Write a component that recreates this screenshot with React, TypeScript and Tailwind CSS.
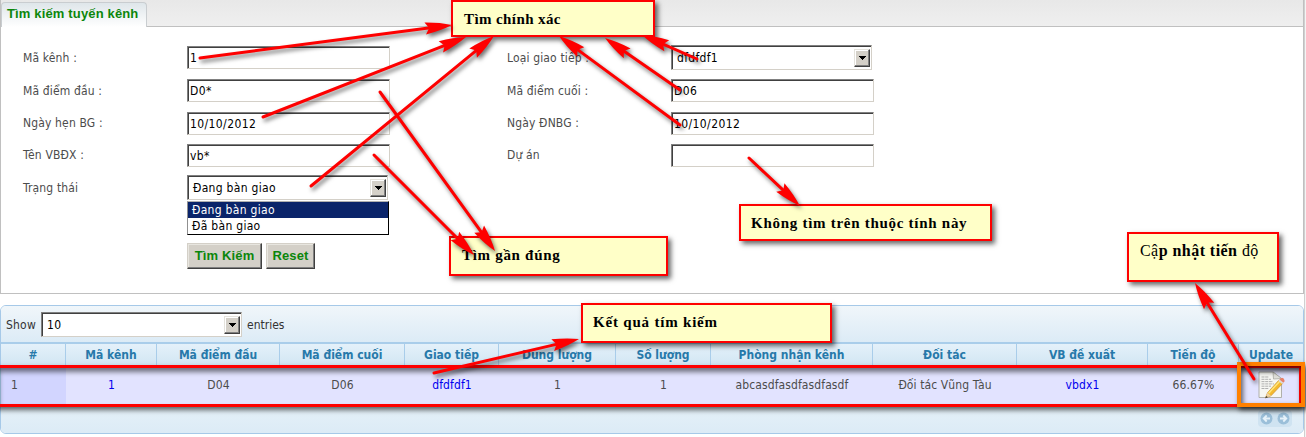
import type { ReactNode } from "react";

const sans = "font-['DejaVu_Sans_Condensed','DejaVu_Sans',sans-serif] [font-stretch:condensed]";

function Field({ value }: { value?: string }) {
  return (
    <div className="flex h-[23px] w-[203px] items-center border border-t-[#808080] border-l-[#808080] border-r-[#d4d0c8] border-b-[#d4d0c8] bg-white">
      <div className="flex h-full w-full items-center border-t border-l border-[#404040] pl-px text-[12px] tracking-[0.4px] text-black">
        {value}
      </div>
    </div>
  );
}

function DropButton() {
  return (
    <div className="flex h-[18px] w-4 items-center justify-center border border-t-[#e4e2dc] border-l-[#e4e2dc] border-r-[#404040] border-b-[#404040] bg-[#d4d0c8] shadow-[inset_-1px_-1px_0_#808080,inset_1px_1px_0_#ffffff]">
      <svg width="7" height="4" viewBox="0 0 7 4" shapeRendering="crispEdges">
        <path d="M0 0H7L3.5 4Z" fill="#000" />
      </svg>
    </div>
  );
}

function Select({ value }: { value: string }) {
  return (
    <div className="h-[25px] w-[201px] border border-t-[#808080] border-l-[#808080] border-r-[#d4d0c8] border-b-[#d4d0c8] bg-white">
      <div className="flex h-full w-full items-center justify-between border-t border-l border-[#404040] pr-px pl-1 text-[12px] tracking-[0.3px] text-black">
        <span>{value}</span>
        <DropButton />
      </div>
    </div>
  );
}

function Label({ children }: { children?: ReactNode }) {
  return <div className="text-[12px] tracking-[0.15px] text-[#4c4c4c]">{children}</div>;
}

function GreyButton({ children, w }: { children: ReactNode; w: string }) {
  return (
    <div
      className={`${w} flex h-[26px] items-center justify-center border border-t-[#d4d0c8] border-l-[#d4d0c8] border-r-[#404040] border-b-[#404040] bg-[#d4d0c8] font-['Liberation_Sans',Arial,sans-serif] text-[13px] font-bold tracking-[0.15px] text-[#0b860b] shadow-[inset_-1px_-1px_0_#808080,inset_1px_1px_0_#e8e6e0]`}
    >
      {children}
    </div>
  );
}

const callouts = [
  { text: "Tìm chính xác", box: "left-[451px] top-0 h-[37px] w-[204px] pt-[7px] pl-[11px] tracking-[0.4px]" },
  { text: "Tìm gần đúng", box: "left-[449px] top-[236px] h-[40px] w-[219px] pt-[7px] pl-[11px] tracking-[0.7px]" },
  { text: "Không tìm trên thuộc tính này", box: "left-[739px] top-[204px] h-[37px] w-[253px] pt-[7px] pl-[10px] tracking-[0.72px]" },
  { text: "Kết quả tím kiếm", box: "left-[581px] top-[303px] h-[40px] w-[251px] pt-[7px] pl-[10px] tracking-[0.8px]" },
];

const arrows = [
  [200, 58, 452, 25],
  [263, 117, 466, 37],
  [311, 186, 494, 36],
  [697, 59, 642, 35],
  [680, 90, 605, 38],
  [680, 125, 559, 36],
  [380, 92, 495, 251],
  [374, 155, 474, 255],
  [749, 158, 800, 206],
  [434, 373, 579, 339],
  [1254, 379, 1195, 283],
];

function Arrow({ from, to }: { from: [number, number]; to: [number, number] }) {
  const [x1, y1] = from;
  const dx = to[0] - x1;
  const dy = to[1] - y1;
  const len = Math.hypot(dx, dy);
  const angle = (Math.atan2(dy, dx) * 180) / Math.PI;
  return (
    <g transform={`translate(${x1} ${y1}) rotate(${angle})`}>
      <path d={`M0 0H${len - 18}`} stroke="#fe0000" strokeWidth="3" strokeLinecap="round" />
      <path
        d={`M${len} 0Q${len - 12} -4.2 ${len - 27} -6L${len - 23} 0L${len - 27} 6Q${len - 12} 4.2 ${len} 0Z`}
        fill="#fe0000"
      />
    </g>
  );
}

const columns = ["#", "Mã kênh", "Mã điểm đầu", "Mã điểm cuối", "Giao tiếp", "Dung lượng", "Số lượng", "Phòng nhận kênh", "Đối tác", "VB đề xuất", "Tiến độ", "Update"];
const row = ["1", "1", "D04", "D06", "dfdfdf1", "1", "1", "abcasdfasdfasdfasdf", "Đối tác Vũng Tàu", "vbdx1", "66.67%"];
const links = [1, 4, 9];
const cols = "grid grid-cols-[65px_91px_123px_125px_94px_117px_95px_162px_144px_131px_91px_1fr]";

function EditIcon() {
  return (
    <svg width="28" height="28" viewBox="0 0 28 28">
      <path d="M2 1H16L24.500 7.500V26.500H2Z" fill="#f6f6f2" stroke="#a9a9a1" strokeWidth=".9" />
      <path d="M16 1L16.500 8L24.500 7.500Z" fill="#e0e0da" stroke="#a3a39b" strokeWidth=".7" />
      <path d="M4.500 6H12M4.500 8.300H14M4.500 10.600H16M4.500 12.900H17M4.500 15.200H14M4.500 17.500H12" stroke="#a8a8a8" strokeWidth=".9" strokeDasharray="3 .7" />
      <path d="M8.500 26.800L10.500 21.800L22 9L25.800 12.300L14 24.800Z" fill="#f4b92e" stroke="#c28522" strokeWidth=".6" />
      <path d="M11.600 22.200L23 9.900" stroke="#ffe67c" strokeWidth="1.500" />
      <path d="M8.500 26.800L10.500 21.800L14 24.800Z" fill="#eed1a1" />
      <path d="M8.200 27.200L9.200 24.900L10.900 26.200Z" fill="#333" />
      <path d="M22 9L23.800 7.200Q25 6.200 26.500 7.500T27.400 10.500L25.800 12.300Z" fill="#e8806a" />
      <path d="M21.300 9.800L22.500 8.500L26.400 11.700L25.200 13Z" fill="#d9dcdf" />
    </svg>
  );
}

function PageArrow({ flip }: { flip?: boolean }) {
  return (
    <svg width="13" height="13" viewBox="0 0 13 13" className={flip ? "rotate-180" : ""}>
      <circle cx="6.500" cy="6.500" r="6" fill="#9bbfd9" />
      <path d="M10 6.500H4M6.700 3.500L3.700 6.500L6.700 9.500" fill="none" stroke="#e6f2fa" strokeWidth="1.800" />
    </svg>
  );
}

export default function App() {
  return (
    <div className={`relative flex h-[437px] w-[1306px] overflow-hidden bg-white ${sans}`}>
      <div className="flex h-full w-[1304px] flex-col">
        <div className="flex h-[294px] w-full flex-col border-r border-b border-l border-[#c0c0c0]">
          <div className="flex h-[27px] shrink-0 items-end border-b border-[#c0c0c0] bg-gradient-to-b from-[#e8e8e8] to-[#efefef]">
            <div className="-mb-px flex h-[25px] w-[146px] items-center rounded-t border border-b-0 border-[#c9cdd0] bg-gradient-to-b from-[#dfe6ea] to-white pb-[2px] pl-[5px] font-['Liberation_Sans',Arial,sans-serif] text-[13px] font-bold tracking-[0.15px] whitespace-nowrap text-[#0b860b]">
              Tìm kiếm tuyến kênh
            </div>
          </div>
          <div className="grid grid-cols-[164px_320px_164px_1fr] grid-rows-[33px_33px_32px_32px_33px] items-center pt-[14px] pl-[22px]">
            <Label>Mã kênh :</Label>
            <Field value="1" />
            <Label>Loại giao tiếp :</Label>
            <Select value="dfdfdf1" />
            <Label>Mã điểm đầu :</Label>
            <Field value="D0*" />
            <Label>Mã điểm cuối :</Label>
            <Field value="D06" />
            <Label>Ngày hẹn BG :</Label>
            <Field value="10/10/2012" />
            <Label>Ngày ĐNBG :</Label>
            <Field value="10/10/2012" />
            <Label>Tên VBĐX :</Label>
            <Field value="vb*" />
            <Label>Dự án</Label>
            <Field />
            <Label>Trạng thái</Label>
            <div className="relative">
              <Select value="Đang bàn giao" />
              <div className="absolute top-[26px] left-0 h-[34px] w-[202px] border border-t-[#b0b0b0] border-r-black border-b-black border-l-[#909090] bg-white text-[12px] leading-4 tracking-[0.3px] text-black">
                <div className="h-4 bg-[#0a246a] pl-1 text-white">Đang bàn giao</div>
                <div className="h-4 pl-1">Đã bàn giao</div>
              </div>
            </div>
          </div>
          <div className="flex gap-1 pt-[39px] pl-[186px]">
            <GreyButton w="w-[75px]">Tìm Kiếm</GreyButton>
            <GreyButton w="w-[49px]">Reset</GreyButton>
          </div>
        </div>

        <div className="mt-[11px] flex h-[129px] w-full flex-col overflow-hidden rounded-md border border-[#a6c9e8]">
          <div className="flex h-[36px] shrink-0 items-center gap-[5px] bg-gradient-to-b from-[#f0f6fa] to-[#dcebf6] pt-px pl-[5px] text-[12px] text-[#333]">
            <span className="w-[30px] tracking-[0.2px]">Show</span>
            <Select value="10" />
            <span>entries</span>
          </div>
          <div className={`${cols} h-[23px] shrink-0 border-t-2 border-[#a9cdea] bg-gradient-to-b from-[#e4f1fa] to-[#d2e6f3]`}>
            {columns.map((c) => (
              <div key={c} className="flex items-center justify-center border-r border-[#a9cdea] text-[12px] font-bold whitespace-nowrap text-[#2779aa] last:border-r-0">
                {c}
              </div>
            ))}
          </div>
          <div className={`${cols} h-[41px] shrink-0 bg-[#e2e3ff] text-[12px] text-[#4c4c4c]`}>
            {row.map((c, i) => (
              <div
                key={i}
                className={`flex items-center pb-[2px] tracking-[0.1px] whitespace-nowrap ${i === 0 ? "bg-[#d2d5ff] pl-[10px]" : "justify-center"} ${links.includes(i) ? "text-[#0000ee]" : ""}`}
              >
                {c}
              </div>
            ))}
            <div className="flex items-center justify-center pb-px">
              <EditIcon />
            </div>
          </div>
          <div className="flex flex-1 items-center justify-end bg-gradient-to-b from-[#e5f1f8] to-[#dcebf6] pr-[11px] pb-[3px]">
            <div className="flex h-[17px] w-[17px] items-center justify-center rounded-l bg-[#cfe3f1]">
              <PageArrow />
            </div>
            <div className="flex h-[17px] w-[17px] items-center justify-center rounded-r bg-[#cfe3f1]">
              <PageArrow flip />
            </div>
          </div>
        </div>
      </div>
      <div className="h-full w-[2px] border-l border-[#d0d0d0] bg-[#f4f4f4]" />

      <div className="absolute top-[365px] -left-[6px] h-[42px] w-[1308px] border-[3px] border-[#fe0000] shadow-[2px_3px_5px_rgba(0,0,0,0.6),inset_2px_4px_5px_rgba(0,0,0,0.5)]" />
      <div className="absolute top-[362px] left-[1237px] h-[45px] w-[68px] border-4 border-[#ff8000] shadow-[2px_3px_5px_rgba(0,0,0,0.6),inset_2px_3px_5px_rgba(0,0,0,0.6)]" />

      {callouts.map((c) => (
        <div
          key={c.text}
          className={`${c.box} absolute border-2 border-[#fe0000] bg-[#ffffc8] font-['Liberation_Serif','Times_New_Roman',serif] text-[15px] leading-5 font-bold whitespace-nowrap text-black shadow-[3px_3px_5px_rgba(0,0,0,0.6)]`}
        >
          {c.text}
        </div>
      ))}
      <div className="absolute top-[232px] left-[1127px] h-[50px] w-[152px] border-2 border-[#fe0000] bg-[#ffffc8] pt-[7px] pl-[11px] font-['Liberation_Serif','Times_New_Roman',serif] text-[16px] leading-5 tracking-[0.45px] whitespace-nowrap text-black shadow-[3px_3px_5px_rgba(0,0,0,0.6)]">
        Cậ<b>p nhật tiến</b> độ
      </div>

      <svg className="absolute inset-0 drop-shadow-[2px_3px_2px_rgba(0,0,0,0.55)]" width="1306" height="437" viewBox="0 0 1306 437">
        {arrows.map(([a, b, c, d]) => (
          <Arrow key={`${a}-${b}`} from={[a, b]} to={[c, d]} />
        ))}
      </svg>
    </div>
  );
}
